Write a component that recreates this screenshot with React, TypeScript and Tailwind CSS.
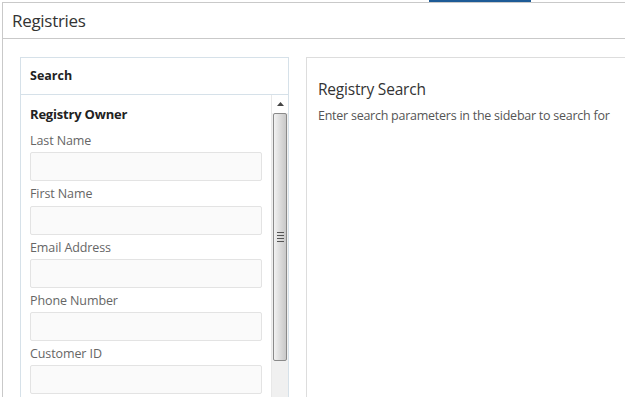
import React from 'react';

const fields = ['Last Name', 'First Name', 'Email Address', 'Phone Number', 'Customer ID'];

const Scrollbar: React.FC = () => (
  <div className="w-[17px] shrink-0 flex flex-col bg-[#f0f0f0] border-l border-[#e8e8e8]">
    {/* up arrow */}
    <div className="h-[18px] flex items-center justify-center bg-white">
      <svg width="7" height="4" viewBox="0 0 7 4">
        <path d="M0 4 L3.5 0 L7 4 Z" fill="#444" />
      </svg>
    </div>
    {/* thumb */}
    <div className="h-[248px] mx-[1px] rounded-[2px] border border-[#8a8a8a] bg-gradient-to-r from-[#f2f2f2] via-[#dcdcdc] to-[#c8c8c8] flex flex-col items-center justify-center gap-[2px]">
      <div className="w-[7px] h-[1px] bg-[#555]" />
      <div className="w-[7px] h-[1px] bg-[#555]" />
      <div className="w-[7px] h-[1px] bg-[#555]" />
      <div className="w-[7px] h-[1px] bg-[#555]" />
    </div>
    <div className="flex-1" />
  </div>
);

export default function App() {
  return (
    <div
      className="w-[625px] h-[397px] overflow-hidden bg-white text-[#333]"
      style={{ fontFamily: '"Open Sans", "Noto Sans", sans-serif' }}
    >
      {/* top nav strip */}
      <div className="h-[2px] flex">
        <div className="ml-[429px] w-[102px] bg-[#1e5b96]" />
      </div>

      <div className="ml-[2px] border-l border-t border-[#c9c9c9] h-[395px] flex flex-col">
        {/* page header */}
        <div className="h-[36px] border-b border-[#c9c9c9] flex items-center pl-[9px] shrink-0">
          <h1 className="text-[17px] tracking-[-0.3px] text-[#333]">Registries</h1>
        </div>

        <div className="flex-1 flex gap-[17px] pl-[17px] pt-[18px] min-h-0">
          {/* sidebar */}
          <div className="w-[269px] shrink-0 border border-[#d6e1e9] border-b-0 flex flex-col">
            <div className="h-[37px] border-b border-[#d6e1e9] flex items-center pl-[9px] pt-[1px] shrink-0">
              <span className="text-[12.5px] font-bold text-[#222]">Search</span>
            </div>
            <div className="flex-1 flex min-h-0">
              <div className="flex-1 pl-[9px] pr-[10px] pt-[9px] overflow-hidden">
                <div className="h-[20px] leading-[20px] text-[13px] font-bold text-[#222] tracking-[-0.2px] mb-[4px]">
                  Registry Owner
                </div>
                {fields.map((f) => (
                  <div key={f}>
                    <div className="h-[24.3px] pt-[4px] leading-[18px] text-[12.5px] text-[#666] tracking-[-0.1px]">
                      {f}
                    </div>
                    <input
                      type="text"
                      className="w-[232px] h-[29px] block bg-[#fafafa] border border-[#e3e3e3] rounded-[2px] outline-none"
                    />
                  </div>
                ))}
              </div>
              <Scrollbar />
            </div>
          </div>

          {/* main panel */}
          <div className="flex-1 border border-[#dddddd] border-r-0 border-b-0 pl-[11px] pt-[21px] overflow-hidden">
            <h2 className="text-[15.5px] leading-[20px] text-[#333] tracking-[-0.2px]">Registry Search</h2>
            <p className="mt-[8px] text-[12.5px] leading-[18px] text-[#555] whitespace-nowrap tracking-[-0.25px]">
              Enter search parameters in the sidebar to search for
            </p>
          </div>
        </div>
      </div>
    </div>
  );
}
